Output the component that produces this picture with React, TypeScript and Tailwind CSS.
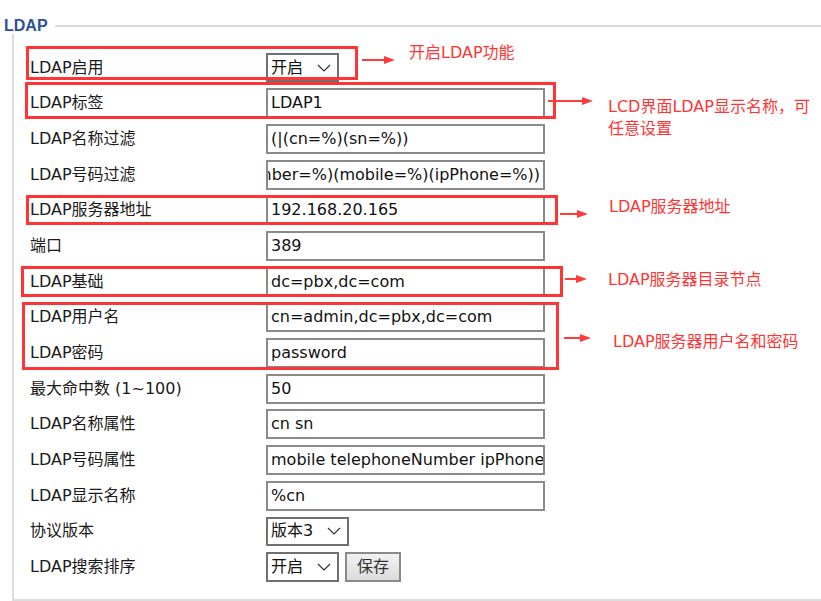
import React from "react";

type Field = {
  label: string;
  value?: string;
  kind?: "input" | "select";
  alignEnd?: boolean;
  width?: string;
};

const fields: Field[] = [
  { label: "LDAP启用", value: "开启", kind: "select", width: "w-[73px]" },
  { label: "LDAP标签", value: "LDAP1" },
  { label: "LDAP名称过滤", value: "(|(cn=%)(sn=%))" },
  { label: "LDAP号码过滤", value: "(|(telephoneNumber=%)(mobile=%)(ipPhone=%))", alignEnd: true },
  { label: "LDAP服务器地址", value: "192.168.20.165" },
  { label: "端口", value: "389" },
  { label: "LDAP基础", value: "dc=pbx,dc=com" },
  { label: "LDAP用户名", value: "cn=admin,dc=pbx,dc=com" },
  { label: "LDAP密码", value: "password" },
  { label: "最大命中数 (1~100)", value: "50" },
  { label: "LDAP名称属性", value: "cn sn" },
  { label: "LDAP号码属性", value: "mobile telephoneNumber ipPhone" },
  { label: "LDAP显示名称", value: "%cn" },
  { label: "协议版本", value: "版本3", kind: "select", width: "w-[83px]" },
];

function Chevron() {
  return (
    <svg width="14" height="8" viewBox="0 0 14 8" className="ml-auto mr-[6px]">
      <path d="M1 1 L7 7 L13 1" fill="none" stroke="#333" strokeWidth="1.2" />
    </svg>
  );
}

function SelectBox({ value, width }: { value: string; width: string }) {
  return (
    <div className={`${width} h-[29px] border-2 border-[#707070] bg-white flex items-center pl-[3px] text-[#111]`}>
      <span>{value}</span>
      <Chevron />
    </div>
  );
}

function TextBox({ value, alignEnd }: { value: string; alignEnd?: boolean }) {
  return (
    <div
      className={`w-[279px] h-[30px] border-2 border-[#8a8a8a] bg-white flex items-center overflow-hidden whitespace-nowrap px-[3px] text-[#111] ${
        alignEnd ? "justify-end" : ""
      }`}
    >
      <span className="shrink-0">{value}</span>
    </div>
  );
}

function Arrow({ className, w }: { className: string; w: number }) {
  return (
    <svg width={w} height="10" viewBox={`0 0 ${w} 10`} className={`absolute ${className}`}>
      <path d={`M0 5 L${w - 8} 5`} stroke="#ff3b3b" strokeWidth="2" />
      <path d={`M${w - 11} 1 L${w} 5 L${w - 11} 9 Z`} fill="#ff3b3b" />
    </svg>
  );
}

export default function App() {
  return (
    <div
      className="relative w-[821px] h-[601px] bg-white overflow-hidden text-[16px] text-[#1a1a1a]"
      style={{ fontFamily: '"DejaVu Sans", "Noto Sans CJK SC", sans-serif' }}
    >
      {/* Legend */}
      <div className="flex items-center h-[50px] pt-[1px]">
        <span
          className="pl-[4px] pr-[7px] text-[16px] font-bold text-[#2d4f9e]"
          style={{ fontFamily: '"Liberation Sans", sans-serif' }}
        >
          LDAP
        </span>
        <div className="flex-1 h-[2px] bg-[#dcdcdc]" />
      </div>

      {/* Fieldset body */}
      <div className="ml-[12px] -mt-[16px] h-[567px] border-l-2 border-b-2 border-[#dcdcdc] pl-[16px] pt-[16px]">
        {fields.map((f) => (
          <div key={f.label} className="flex items-center h-[35.67px]">
            <div className="w-[236px] shrink-0">{f.label}</div>
            {f.kind === "select" ? (
              <SelectBox value={f.value ?? ""} width={f.width ?? "w-[73px]"} />
            ) : (
              <TextBox value={f.value ?? ""} alignEnd={f.alignEnd} />
            )}
          </div>
        ))}
        <div className="flex items-center h-[35.67px]">
          <div className="w-[236px] shrink-0">LDAP搜索排序</div>
          <div className="w-[73px] h-[30px] border-2 border-[#707070] bg-white flex items-center pl-[3px] text-[#111]">
            <span>开启</span>
            <Chevron />
          </div>
          <button className="ml-[6px] w-[56px] h-[30px] border-2 border-[#8a8a8a] bg-gradient-to-b from-[#f2f2f2] to-[#dcdcdc] text-[#333]">
            保存
          </button>
        </div>
      </div>

      {/* Annotations */}
      <div className="absolute left-[26px] top-[46px] w-[332px] h-[34px] border-[3px] border-[#ff3535]" />
      <div className="absolute left-[25px] top-[82px] w-[531px] h-[37px] border-[3px] border-[#ff3535]" />
      <div className="absolute left-[26px] top-[195px] w-[532px] h-[30px] border-[3px] border-[#ff3535]" />
      <div className="absolute left-[21px] top-[266px] w-[542px] h-[31px] border-[3px] border-[#ff3535]" />
      <div className="absolute left-[22px] top-[302px] w-[537px] h-[68px] border-[3px] border-[#ff3535]" />

      <Arrow className="left-[362px] top-[55px]" w={33} />
      <Arrow className="left-[548px] top-[96px]" w={45} />
      <Arrow className="left-[560px] top-[209px]" w={28} />
      <Arrow className="left-[565px] top-[274px]" w={22} />
      <Arrow className="left-[564px] top-[333px]" w={27} />

      <div className="absolute text-[16px] text-[#ff3535] leading-[22px] left-[409px] top-[42px]">开启LDAP功能</div>
      <div className="absolute text-[16px] text-[#ff3535] leading-[22px] left-[608px] top-[96px]">
        LCD界面LDAP显示名称，可
        <br />
        任意设置
      </div>
      <div className="absolute text-[16px] text-[#ff3535] leading-[22px] left-[609px] top-[196px]">LDAP服务器地址</div>
      <div className="absolute text-[16px] text-[#ff3535] leading-[22px] left-[608px] top-[269px]">LDAP服务器目录节点</div>
      <div className="absolute text-[16px] text-[#ff3535] leading-[22px] left-[613px] top-[331px]">LDAP服务器用户名和密码</div>
    </div>
  );
}
